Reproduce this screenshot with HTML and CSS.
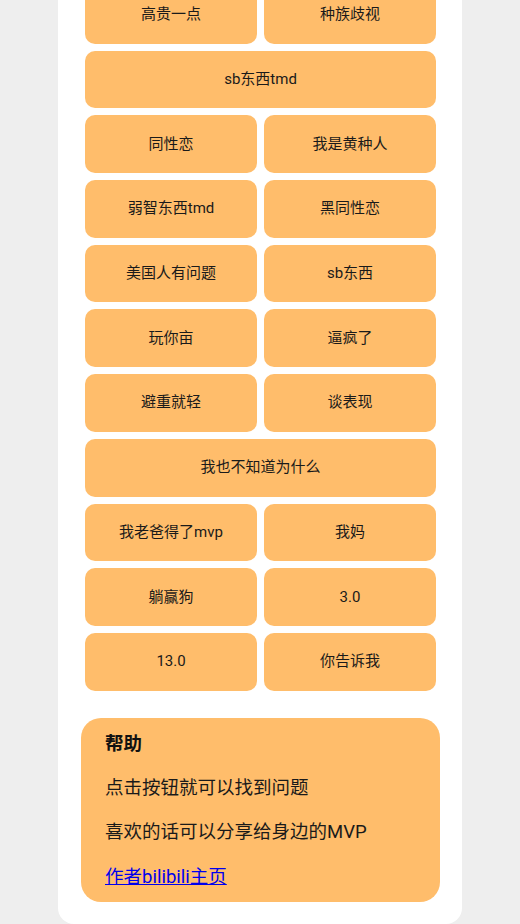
FILE: index.html
```html
<!DOCTYPE html>
<html lang="zh-CN">
<head>
  <meta charset="UTF-8" />
  <meta name="viewport" content="width=device-width, initial-scale=1.0" />
  <title>找问题</title>
  <link rel="stylesheet" href="styles.css">
</head>
<body>
  <div class="card">
    <div class="grid">
      <button class="btn">高贵一点</button>
      <button class="btn">种族歧视</button>
      <button class="btn wide">sb东西tmd</button>
      <button class="btn">同性恋</button>
      <button class="btn">我是黄种人</button>
      <button class="btn">弱智东西tmd</button>
      <button class="btn">黑同性恋</button>
      <button class="btn">美国人有问题</button>
      <button class="btn">sb东西</button>
      <button class="btn">玩你亩</button>
      <button class="btn">逼疯了</button>
      <button class="btn">避重就轻</button>
      <button class="btn">谈表现</button>
      <button class="btn wide">我也不知道为什么</button>
      <button class="btn">我老爸得了mvp</button>
      <button class="btn">我妈</button>
      <button class="btn">躺赢狗</button>
      <button class="btn">3.0</button>
      <button class="btn">13.0</button>
      <button class="btn">你告诉我</button>
    </div>

    <div class="help">
      <h3>帮助</h3>
      <p>点击按钮就可以找到问题</p>
      <p>喜欢的话可以分享给身边的MVP</p>
      <p><a href="#">作者bilibili主页</a></p>
    </div>
  </div>
</body>
</html>
```

FILE: styles.css
```css
body {
  margin: 0;
  background: #eeeeee;
  font-family: Roboto, "Noto Sans CJK SC", sans-serif;
  color: #1a1a1a;
  overflow: hidden;
}

.card {
  width: 404px;
  margin: -14px auto 0;
  padding: 0 22px 22px 23px;
  box-sizing: border-box;
  background: #ffffff;
  border-radius: 0 0 16px 16px;
}

.grid {
  display: grid;
  grid-template-columns: 1fr 1fr;
  column-gap: 7px;
  row-gap: 7px;
  padding: 0 4px;
}

.btn {
  height: 57.7px;
  padding: 0 0 1px;
  border: none;
  border-radius: 10px;
  background: #ffbd6b;
  font-family: Roboto, "Noto Sans CJK SC", sans-serif;
  font-size: 15px;
  line-height: 20px;
  color: #1a1a1a;
  cursor: pointer;
}

.btn.wide {
  grid-column: span 2;
}

.help {
  margin-top: 27px;
  background: #ffbd6b;
  border-radius: 20px;
  padding: 14px 24px 13px;
}

.help h3 {
  margin: 0;
  font-size: 18.5px;
  line-height: 24px;
  font-weight: bold;
  color: #111;
}

.help p {
  margin: 20px 0 0;
  font-size: 18.5px;
  line-height: 24.5px;
}

.help a {
  color: #0000ee;
}
```
